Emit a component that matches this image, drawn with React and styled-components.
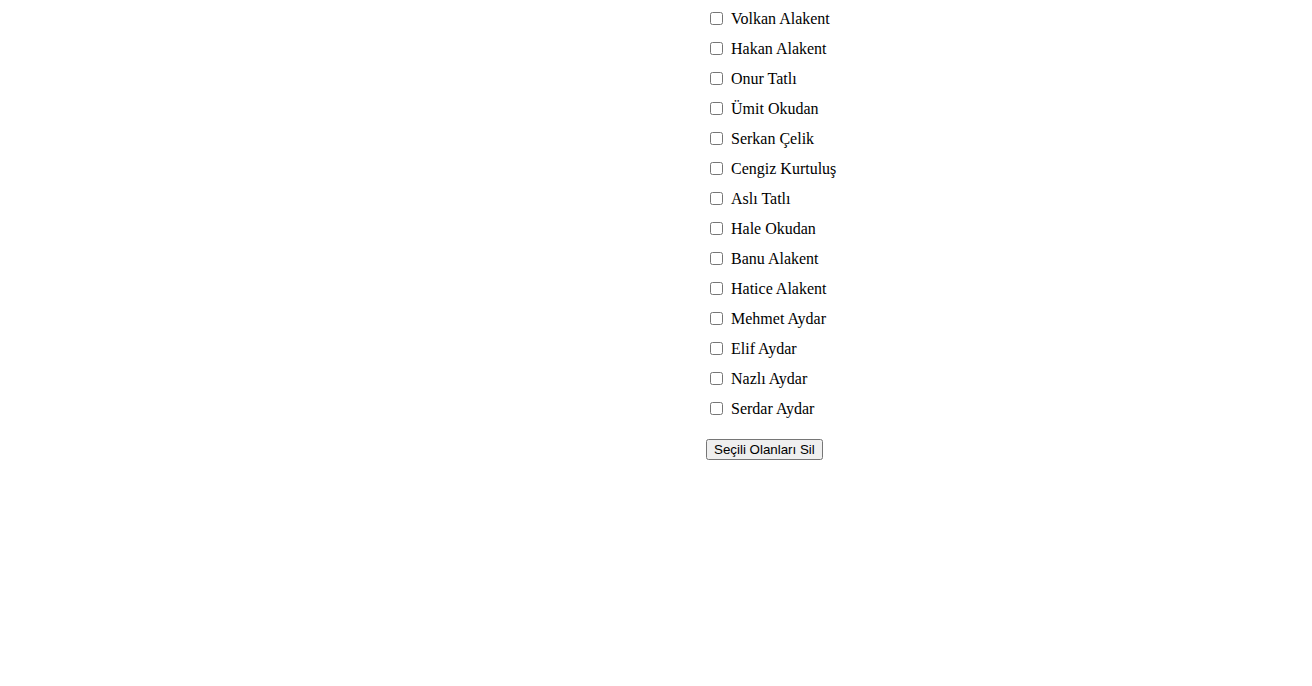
import React from "react";
import styled, { createGlobalStyle } from "styled-components";

const Global = createGlobalStyle`
  html, body { margin: 0; padding: 0; background: #fff; }
  body { font-family: "Liberation Serif", "Times New Roman", serif; font-size: 16px; color: #000; }
`;

const Page = styled.div`
  padding: 3px 0 0 706px;
`;

const List = styled.ul`
  list-style: none;
  margin: 0;
  padding: 0;
`;

const Row = styled.li`
  display: flex;
  align-items: center;
  height: 30px;
`;

const Box = styled.input`
  width: 13px;
  height: 13px;
  margin: 0 0 0 4px;
`;

const Name = styled.label`
  margin-left: 8px;
  padding-top: 2px;
  line-height: 18px;
`;

const DeleteButton = styled.button`
  margin-top: 16px;
  font-family: "Liberation Sans", Arial, sans-serif;
  font-size: 13.333px;
  padding: 1px 6px;
  height: 21px;
`;

const names = [
  "Volkan Alakent",
  "Hakan Alakent",
  "Onur Tatlı",
  "Ümit Okudan",
  "Serkan Çelik",
  "Cengiz Kurtuluş",
  "Aslı Tatlı",
  "Hale Okudan",
  "Banu Alakent",
  "Hatice Alakent",
  "Mehmet Aydar",
  "Elif Aydar",
  "Nazlı Aydar",
  "Serdar Aydar",
];

export default function App() {
  return (
    <Page>
      <Global />
      <List>
        {names.map((n, i) => (
          <Row key={n}>
            <Box type="checkbox" id={`p${i}`} />
            <Name htmlFor={`p${i}`}>{n}</Name>
          </Row>
        ))}
      </List>
      <DeleteButton>Seçili Olanları Sil</DeleteButton>
    </Page>
  );
}
